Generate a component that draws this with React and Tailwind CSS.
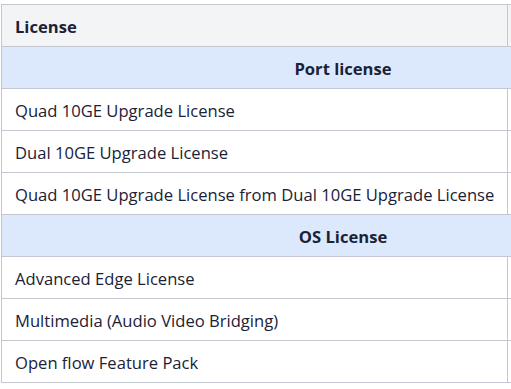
import React from 'react';

const sections = [
    {
        title: 'Port license',
        rows: [
            'Quad 10GE Upgrade License',
            'Dual 10GE Upgrade License',
            'Quad 10GE Upgrade License from Dual 10GE Upgrade License',
        ],
    },
    {
        title: 'OS License',
        rows: [
            'Advanced Edge License',
            'Multimedia (Audio Video Bridging)',
            'Open flow Feature Pack',
        ],
    },
];

export default function App() {
    return (
        <div
            className="w-[511px] h-[389px] overflow-hidden bg-white pt-[4px] pl-[1px]"
            style={{ fontFamily: '"Open Sans", "Noto Sans", sans-serif' }}
        >
            <table className="w-[683px] table-fixed border-collapse text-[16.6px] text-[#1b2236]">
                <colgroup>
                    <col className="w-[506px]" />
                    <col className="w-[177px]" />
                </colgroup>
                <thead>
                    <tr className="h-[42px] bg-[#f3f4f6]">
                        <th className="border border-[#c3c7cf] px-[13px] pt-[3px] text-left font-bold">License</th>
                        <th className="border border-[#c3c7cf] px-[13px] pt-[3px] text-left font-bold"></th>
                    </tr>
                </thead>
                <tbody>
                    {sections.map((section) => (
                        <React.Fragment key={section.title}>
                            <tr className="h-[42px] bg-[#dce9fd]">
                                <td colSpan={2} className="border border-[#c3c7cf] px-[13px] pt-[3px] text-center font-bold">
                                    {section.title}
                                </td>
                            </tr>
                            {section.rows.map((row) => (
                                <tr key={row} className="h-[42px]">
                                    <td className="border border-[#c3c7cf] px-[13px] pt-[3px] whitespace-nowrap">{row}</td>
                                    <td className="border border-[#c3c7cf] px-[13px] pt-[3px]"></td>
                                </tr>
                            ))}
                        </React.Fragment>
                    ))}
                </tbody>
            </table>
        </div>
    );
}
